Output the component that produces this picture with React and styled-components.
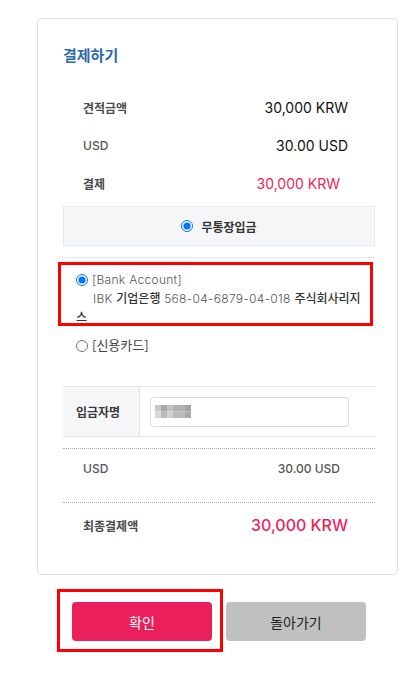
import React from "react";
import styled, { createGlobalStyle } from "styled-components";

const GlobalStyle = createGlobalStyle`
  body {
    margin: 0;
    background: #fff;
    font-family: Inter, "Noto Sans CJK KR", sans-serif;
  }
`;

const Page = styled.div`
  width: 420px;
  box-sizing: border-box;
  padding: 18px 0 30px 37px;
`;

const Card = styled.section`
  width: 361px;
  height: 557px;
  box-sizing: border-box;
  border: 1px solid #dedede;
  border-radius: 5px;
  padding: 26px 22px 0 25px;
`;

const Title = styled.h2`
  margin: 0;
  font-size: 15px;
  line-height: 20px;
  font-weight: 700;
  color: #2f6aa8;
  font-family: "Noto Sans CJK KR", sans-serif;
`;

const Summary = styled.div`
  margin-top: 23px;
`;

const Row = styled.div`
  display: flex;
  align-items: center;
  justify-content: space-between;
  height: ${(p) => p.$h || 38}px;
  padding: 0 ${(p) => p.$right || 27}px 0 20px;
`;

const Label = styled.span`
  font-family: "Noto Sans CJK KR", sans-serif;
  font-size: 12px;
  font-weight: 700;
  color: #4a4a4a;
  ${(p) => p.$latin && "font-family: Inter, sans-serif; font-weight: 500; font-size: 12px; color: #555;"}
`;

const Value = styled.span`
  font-size: ${(p) => p.$size || 14}px;
  font-weight: ${(p) => p.$weight || 400};
  color: ${(p) => p.$color || "#111"};
`;

const MethodBox = styled.div`
  margin-top: 4px;
  height: 40px;
  box-sizing: border-box;
  border: 1px solid #e6e9ea;
  background: #f4f6f7;
  display: flex;
  align-items: center;
  justify-content: center;
  gap: 6px;
  font-family: "Noto Sans CJK KR", sans-serif;
  font-size: 12px;
  font-weight: 700;
  color: #333;
`;

const Radio = styled.input.attrs({ type: "radio" })`
  width: 12px;
  height: 12px;
  margin: 0 ${(p) => p.$gap || 4}px 0 0;
  vertical-align: -2px;
`;

const Divider = styled.div`
  margin-top: 11px;
  border-top: 1px solid #e3e3e3;
`;

const Option = styled.label`
  position: relative;
  display: block;
  margin-top: ${(p) => p.$top}px;
  padding-left: 13px;
  width: 306px;
  box-sizing: border-box;
  font-size: 12px;
  line-height: 18px;
  font-weight: 300;
  letter-spacing: 0.3px;
  color: #555;
  word-break: break-all;
`;

const AccountLine = styled.span`
  margin-left: 17px;
  color: #555;
  b {
    font-family: "Noto Sans CJK KR", sans-serif;
    font-weight: 500;
    letter-spacing: 0;
    color: #333;
  }
`;

const Highlight = styled.span`
  position: absolute;
  border: 3px solid #ff0000;
  pointer-events: none;
  top: ${(p) => p.$top}px;
  left: ${(p) => p.$left}px;
  right: ${(p) => p.$right}px;
  bottom: ${(p) => p.$bottom}px;
`;

const KrText = styled.span`
  font-family: "Noto Sans CJK KR", sans-serif;
  font-size: 13px;
  font-weight: 400;
  letter-spacing: 0;
  color: #444;
`;

const NameTable = styled.div`
  margin-top: 31px;
  display: grid;
  grid-template-columns: 77px 1fr;
  height: 51px;
  box-sizing: border-box;
  border-top: 1px solid #e3e3e3;
  border-bottom: 1px solid #e3e3e3;
`;

const HeadCell = styled.div`
  background: #f4f6f7;
  border-right: 1px solid #e3e3e3;
  display: flex;
  align-items: center;
  padding-left: 13px;
  font-family: "Noto Sans CJK KR", sans-serif;
  font-size: 12px;
  font-weight: 700;
  color: #3a3a3a;
`;

const InputCell = styled.div`
  display: flex;
  align-items: center;
  padding-left: 10px;
`;

const NameField = styled.div`
  width: 199px;
  height: 30px;
  box-sizing: border-box;
  border: 1px solid #dcdcdc;
  border-radius: 3px;
  display: flex;
  align-items: center;
  padding-left: 4px;
`;

const Dotted = styled.div`
  margin-top: ${(p) => p.$top || 0}px;
  border-top: 1px dotted #a8a8a8;
`;

const Actions = styled.div`
  display: flex;
  gap: 14px;
  margin-top: 27px;
  padding-left: 35px;
`;

const Button = styled.button`
  position: relative;
  width: 140px;
  height: 39px;
  border: none;
  border-radius: 4px;
  background: ${(p) => (p.$primary ? "#ea1f5c" : "#c0c0c0")};
  color: ${(p) => (p.$primary ? "#fff" : "#222")};
  font-family: "Noto Sans CJK KR", sans-serif;
  font-size: 14px;
  padding: 0;
`;

const blurBlocks = [
  ["#c9c9c9", "#a9a9a9", "#c2c2c2", "#b2b2b2", "#b1b1b1", "#a2a2a2"],
  ["#d9d9d9", "#b9b9b9", "#d0d0d0", "#bbbbbb", "#bcbcbc", "#aaaaaa"],
];

const BlurredName = () => (
  <svg width="36" height="13" viewBox="0 0 36 13">
    {blurBlocks.map((row, r) =>
      row.map((c, i) => (
        <rect key={`${r}-${i}`} x={i * 6} y={r * 6.5} width="6" height="6.5" fill={c} />
      ))
    )}
  </svg>
);

export default function App() {
  return (
    <Page>
      <GlobalStyle />
      <Card>
        <Title>결제하기</Title>
        <Summary>
          <Row>
            <Label>견적금액</Label>
            <Value>30,000 KRW</Value>
          </Row>
          <Row>
            <Label $latin>USD</Label>
            <Value>30.00 USD</Value>
          </Row>
          <Row $right={35}>
            <Label>결제</Label>
            <Value $color="#ec1f5e">30,000 KRW</Value>
          </Row>
        </Summary>

        <MethodBox>
          <Radio name="method" defaultChecked $gap={2} />
          무통장입금
        </MethodBox>
        <Divider />

        <Option $top={13}>
          <Highlight $top={-9} $left={-5} $right={-4} $bottom={1} />
          <Radio name="bank" defaultChecked />
          [Bank Account]
          <br />
          <AccountLine>
            IBK <b>기업은행</b> 568-04-6879-04-018 <b>주식회사리지스</b>
          </AccountLine>
        </Option>
        <Option $top={9}>
          <Radio name="bank" />
          <KrText>[신용카드]</KrText>
        </Option>

        <NameTable>
          <HeadCell>입금자명</HeadCell>
          <InputCell>
            <NameField>
              <BlurredName />
            </NameField>
          </InputCell>
        </NameTable>

        <Dotted $top={11} />
        <Row $right={35}>
          <Label $latin>USD</Label>
          <Value $size={12} $weight={500} $color="#555">30.00 USD</Value>
        </Row>
        <Dotted $top={15} />
        <Row $h={44}>
          <Label>최종결제액</Label>
          <Value $size={16} $weight={500} $color="#ec1f5e">30,000 KRW</Value>
        </Row>
      </Card>

      <Actions>
        <Button $primary>
          <Highlight $top={-13} $left={-15} $right={-11} $bottom={-11} />
          확인
        </Button>
        <Button>돌아가기</Button>
      </Actions>
    </Page>
  );
}
